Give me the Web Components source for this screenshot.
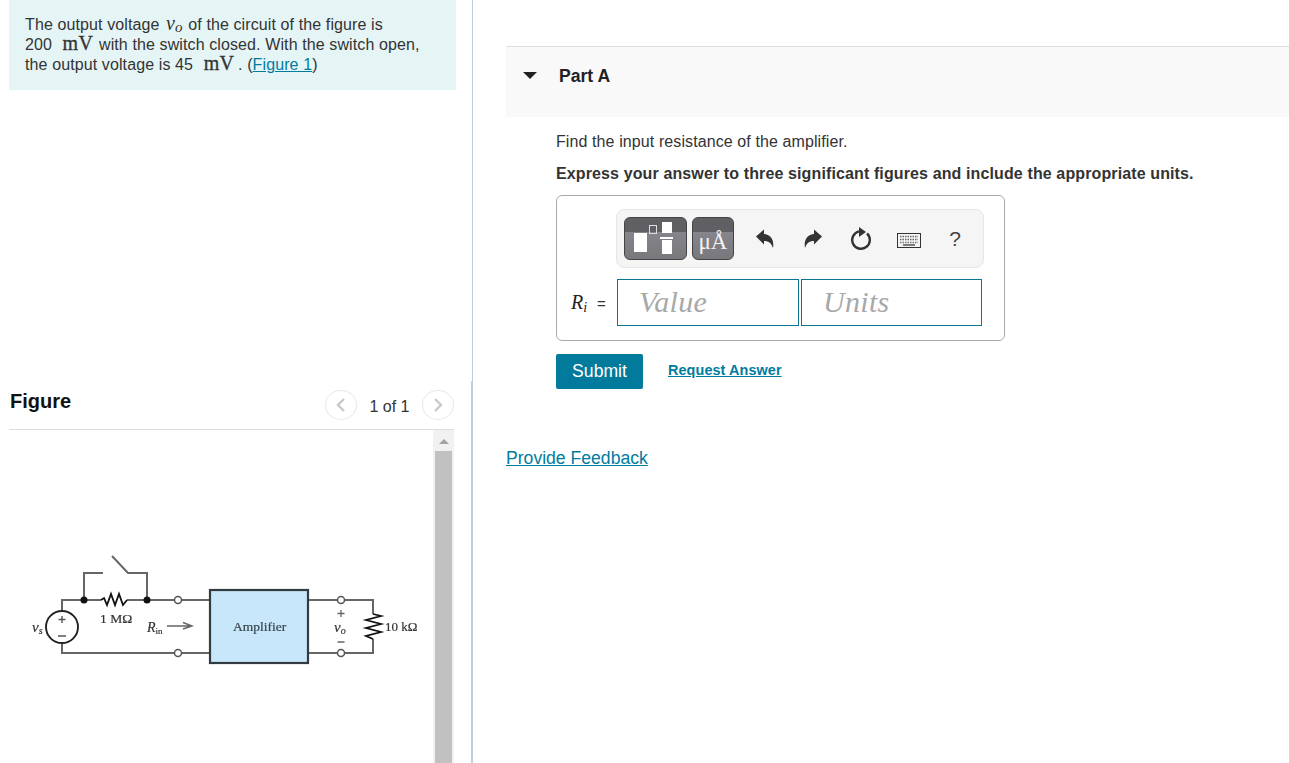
<!DOCTYPE html>
<html>
<head>
<meta charset="utf-8">
<title>Part A</title>
<style>
  html, body { margin: 0; height: 100%; background: #fff; }
  body { font: 16px "Liberation Sans", Arial, sans-serif; color: #333; overflow: hidden; }
</style>
</head>
<body>
<mp-app></mp-app>

<script>
// 1. App shell, two panes
class MpApp extends HTMLElement {
  constructor() {
    super();
    this.attachShadow({ mode: 'open' });
  }
  connectedCallback() {
    this.shadowRoot.innerHTML = `
      <style>
        :host { display: grid; grid-template-columns: 473px 1fr; height: 763px; overflow: hidden; }
        .left { display: flex; flex-direction: column; min-height: 0; }
      </style>
      <div class="left">
        <mp-problem></mp-problem>
        <mp-figure></mp-figure>
      </div>
      <mp-part></mp-part>
    `;
  }
}
customElements.define('mp-app', MpApp);

// 2. Problem statement
class MpProblem extends HTMLElement {
  constructor() {
    super();
    this.attachShadow({ mode: 'open' });
  }
  connectedCallback() {
    this.shadowRoot.innerHTML = `
      <style>
        :host { display: block; height: 381px; box-sizing: border-box; padding: 0 16px 0 9px; border-right: 1px solid #b9cfe3; }
        .intro { background: #e5f5f6; height: 90px; box-sizing: border-box; padding: 15px 16px; line-height: 20px; color: #333; letter-spacing: .11px; white-space: nowrap; }
        .m { font: italic 20px/0 "Liberation Serif", serif; margin: 0 1px 0 2px; }
        .m small { font-size: 15px; position: relative; top: 2px; }
        .mv { font: 20px/0 "Liberation Serif", serif; margin: 0 1px 0 6px; -webkit-text-stroke: .3px #333; letter-spacing: .4px; }
        .tail { margin-left: -2px; }
        a { color: #007c9e; }
      </style>
      <div class="intro">The output voltage <span class="m">v<small>o</small></span> of the circuit of the figure is<br>200 <span class="mv">mV</span> with the switch closed. With the switch open,<br>the output voltage is 45 <span class="mv">mV</span> <span class="tail">.</span> (<a href="#">Figure 1</a>)</div>
    `;
  }
}
customElements.define('mp-problem', MpProblem);

// 3. Figure panel with pager and scroller
class MpFigure extends HTMLElement {
  constructor() {
    super();
    this.attachShadow({ mode: 'open' });
  }
  connectedCallback() {
    this.shadowRoot.innerHTML = `
      <style>
        :host { display: flex; flex-direction: column; flex: 1; min-height: 0; padding: 0 17px 0 9px; border-right: 2px solid #b9cfe3; }
        .head { height: 49px; box-sizing: border-box; border-bottom: 1px solid #ddd; display: flex; align-items: flex-start; }
        h2 { margin: 8px 0 0 1px; font-size: 20px; line-height: 24px; color: #111; flex: 1; }
        .pager { display: flex; align-items: center; margin: 8px 0 0; color: #333; }
        .pager span { width: 65px; text-align: center; line-height: 32px; position: relative; top: 2px; }
        .nav { width: 32px; height: 30px; box-sizing: border-box; border: 1px solid #e8e8e8; border-radius: 50%; display: flex; align-items: center; justify-content: center; }
        .body { flex: 1; display: flex; min-height: 0; }
        .canvas { flex: 1; padding: 115px 0 0 11px; }
        .bar { width: 21px; background: #f1f1f1; display: flex; flex-direction: column; align-items: center; }
        .up { width: 0; height: 0; margin: 9px 0 7px; border: 5px solid transparent; border-top: 0; border-bottom: 5px solid #a3a3a3; }
        .thumb { width: 17px; flex: 1; background: #c1c1c1; }
      </style>
      <div class="head">
        <h2>Figure</h2>
        <div class="pager">
          <div class="nav"><svg width="10" height="16" viewBox="0 0 10 16"><path d="M8 2 2 8l6 6" fill="none" stroke="#c9c9c9" stroke-width="2.4"/></svg></div>
          <span>1 of 1</span>
          <div class="nav"><svg width="10" height="16" viewBox="0 0 10 16"><path d="M2 2l6 6-6 6" fill="none" stroke="#c9c9c9" stroke-width="2.4"/></svg></div>
        </div>
      </div>
      <div class="body">
        <div class="canvas"><mp-circuit></mp-circuit></div>
        <div class="bar"><div class="up"></div><div class="thumb"></div></div>
      </div>
    `;
  }
}
customElements.define('mp-figure', MpFigure);

// 4. Circuit drawing, viewBox is in page coordinates
class MpCircuit extends HTMLElement {
  constructor() {
    super();
    this.attachShadow({ mode: 'open' });
  }
  connectedCallback() {
    this.shadowRoot.innerHTML = `
      <style>
        :host { display: block; width: 410px; height: 135px; }
        svg { display: block; filter: blur(.4px); }
        text { font-family: "Liberation Serif", serif; fill: #333; stroke: #333; stroke-width: .2px; }
      </style>
      <svg width="410" height="135" viewBox="20 545 410 135">
        <g fill="none" stroke="#666" stroke-width="2">
          <path d="M62 611V600H101M127 600H174.500M181.500 600H210"/>
          <path d="M62 643V653H174.500M181.500 653H210"/>
          <path d="M84 600V573H103M112 556 128 573H147V600"/>
          <path d="M308 600H337.500M344.500 600H373V614M373 639V653H344.500M337.500 653H308"/>
        </g>
        <path d="M101 600l3-2 3 7 4-11 4 11 4-11 4 11 4-5" fill="none" stroke="#111" stroke-width="1.800"/>
        <path d="M373 614l8 2-15 4 15 4-15 4 15 4-15 4 7 3" fill="none" stroke="#111" stroke-width="1.800"/>
        <circle cx="62" cy="627" r="16" fill="#fff" stroke="#222" stroke-width="1.900"/>
        <path d="M62 616v7M58.500 619.500h7M58 636h8" stroke="#555" stroke-width="1.400"/>
        <circle cx="84" cy="600" r="3.500" fill="#111"/>
        <circle cx="147" cy="600" r="3.500" fill="#111"/>
        <g fill="#fff" stroke="#555" stroke-width="1.500">
          <circle cx="178" cy="600" r="3.500"/>
          <circle cx="178" cy="653" r="3.500"/>
          <circle cx="341" cy="600" r="3.500"/>
          <circle cx="341" cy="653" r="3.500"/>
        </g>
        <rect x="210" y="590" width="98" height="73" fill="#c8e7fb" stroke="#333b40" stroke-width="2.200"/>
        <path d="M167 626H190M183 622.500 192 626 183 629" fill="none" stroke="#666" stroke-width="1.400"/>
        <path d="M341 610v7M337.500 613.500h7M337.500 642h7" stroke="#666" stroke-width="1.300"/>
        <text x="32" y="632" font-size="15" font-style="italic">v<tspan font-size="10" dy="2">s</tspan></text>
        <text x="100" y="623" font-size="13.500">1 MΩ</text>
        <text x="147" y="632" font-size="14" font-style="italic">R<tspan font-size="9" dy="2" font-style="normal">in</tspan></text>
        <text x="233" y="631" font-size="13.500" style="fill:#37474f">Amplifier</text>
        <text x="334" y="632" font-size="15" font-style="italic">v<tspan font-size="10" dy="2">o</tspan></text>
        <text x="385" y="631" font-size="13">10 kΩ</text>
      </svg>
    `;
  }
}
customElements.define('mp-circuit', MpCircuit);

// 5. Part A
class MpPart extends HTMLElement {
  constructor() {
    super();
    this.attachShadow({ mode: 'open' });
  }
  connectedCallback() {
    this.shadowRoot.innerHTML = `
      <style>
        :host { display: block; padding: 46px 0 0 33px; color: #333; }
        .bar { height: 71px; box-sizing: border-box; background: #f9f9f9; border-top: 1px solid #ddd; display: flex; align-items: flex-start; padding: 19px 0 0 17px; }
        .tri { width: 0; height: 0; margin: 6px 22px 0 0; border: 7px solid transparent; border-bottom: 0; border-top: 7px solid #222; }
        h3 { margin: 0; font-size: 17.6px; line-height: 20px; color: #222; }
        .inner { padding: 15px 0 0 50px; }
        p { margin: 0; line-height: 20px; letter-spacing: .1px; }
        .bold { font-weight: bold; margin-top: 12px; letter-spacing: .12px; }
        .actions { display: flex; align-items: center; margin-top: 13px; }
        button { width: 87px; height: 35px; border: 0; border-radius: 2px; background: #027a9c; color: #fff; font: 17.6px "Liberation Sans", Arial, sans-serif; padding: 0; }
        .req { margin: -3px 0 0 25px; font-size: 14.4px; letter-spacing: .1px; font-weight: bold; color: #007c9e; }
        .fb { display: block; margin-top: 58px; font-size: 17.6px; line-height: 22px; color: #007c9e; width: max-content; }
      </style>
      <div class="bar"><div class="tri"></div><h3>Part A</h3></div>
      <div class="inner">
        <p>Find the input resistance of the amplifier.</p>
        <p class="bold">Express your answer to three significant figures and include the appropriate units.</p>
        <mp-answer></mp-answer>
        <div class="actions"><button>Submit</button><a class="req" href="#">Request Answer</a></div>
      </div>
      <a class="fb" href="#">Provide Feedback</a>
    `;
  }
}
customElements.define('mp-part', MpPart);

// 6. Answer box
class MpAnswer extends HTMLElement {
  constructor() {
    super();
    this.attachShadow({ mode: 'open' });
  }
  connectedCallback() {
    this.shadowRoot.innerHTML = `
      <style>
        :host { display: block; width: 449px; height: 146px; box-sizing: border-box; margin-top: 11px; padding: 13px 0 0 59px; border: 1px solid #aaa; border-radius: 6px; }
        .row { display: flex; margin: 11px 0 0 -45px; align-items: center; }
        .label { width: 46px; font-size: 15px; white-space: nowrap; }
        .label i { font: italic 20px "Liberation Serif", serif; color: #222; margin-right: 10px; }
        .label small { font-size: 14px; position: relative; top: 3px; }
        .field { height: 47px; box-sizing: border-box; border: 1px solid #0a7794; font: italic 30px "Liberation Serif", serif; color: #a8a8a8; padding: 6px 0 0 21px; line-height: 32px; letter-spacing: .3px; }
        .v { width: 182px; margin-right: 2px; }
        .u { width: 181px; }
      </style>
      <mp-toolbar></mp-toolbar>
      <div class="row">
        <div class="label"><i>R<small>i</small></i>=</div>
        <div class="field v">Value</div>
        <div class="field u">Units</div>
      </div>
    `;
  }
}
customElements.define('mp-answer', MpAnswer);

// 7. Math toolbar
class MpToolbar extends HTMLElement {
  constructor() {
    super();
    this.attachShadow({ mode: 'open' });
  }
  connectedCallback() {
    this.shadowRoot.innerHTML = `
      <style>
        :host { display: flex; align-items: center; width: 368px; height: 59px; box-sizing: border-box; padding: 0 0 0 7px; background: #f5f5f5; border: 1px solid #e6e6e6; border-radius: 8px; }
        .btn { height: 43px; box-sizing: border-box; border: 1px solid #444; border-radius: 6px; position: relative; overflow: hidden; background: linear-gradient(#5f5f64 0 14px, #85858b 14px, #77777c); }
        .tpl { width: 63px; margin-right: 5px; }
        .tpl svg { display: block; }
        .unit { width: 42px; color: #f4f4f4; font: 23px "Liberation Serif", serif; text-align: center; line-height: 47px; }
        .cell { width: 48px; height: 43px; display: flex; align-items: center; justify-content: center; }
        .first { margin-left: 7px; }
        .q { font: 21px "Liberation Sans", Arial, sans-serif; color: #444; margin-left: -2px; }
        .kb { padding-top: 3px; height: 40px; }
      </style>
      <div class="btn tpl"><svg width="61" height="41" viewBox="625 218 61 41">
        <rect x="634" y="233" width="13" height="19" fill="#fff"/>
        <rect x="649.500" y="225.500" width="7" height="8" fill="none" stroke="#ddd"/>
        <rect x="662" y="222" width="10" height="11" fill="#fff"/>
        <rect x="660" y="237" width="13" height="2" fill="#fff"/>
        <rect x="662" y="240" width="10" height="14" fill="#fff"/>
      </svg></div>
      <div class="btn unit">μÅ</div>
      <div class="cell first"><svg width="18" height="20" viewBox="0 0 18 20"><path d="M0 7.500 8 .5v4.500c6 .5 10.500 5 9 14C15.500 14.500 13 12 8 12v3.500z" fill="#333"/></svg></div>
      <div class="cell"><svg width="18" height="20" viewBox="0 0 18 20"><path d="M18 7.500 10 .5v4.500C4 5.500-.5 10 1 19 2.500 14.500 5 12 10 12v3.500z" fill="#333"/></svg></div>
      <div class="cell"><svg width="22" height="24" viewBox="0 0 22 24"><path d="M9 4.400A8.800 8.800 0 1 0 17 6.500" fill="none" stroke="#333" stroke-width="2.400"/><path d="M9 0v10l7-5z" fill="#333"/></svg></div>
      <div class="cell kb"><svg width="24" height="15" viewBox="0 0 24 15"><rect x=".5" y=".5" width="23" height="14" fill="#f5f5f5" stroke="#333"/><path d="M3 3.500h18M3 6.500h18" stroke="#666" stroke-width="1.500" stroke-dasharray="1.500 1"/><path d="M3 9.500h18" stroke="#777" stroke-width="1.500" stroke-dasharray="1.500 1"/><path d="M6 12h12" stroke="#555" stroke-width="1.500"/></svg></div>
      <div class="cell q">?</div>
    `;
  }
}
customElements.define('mp-toolbar', MpToolbar);
</script>
</body>
</html>
